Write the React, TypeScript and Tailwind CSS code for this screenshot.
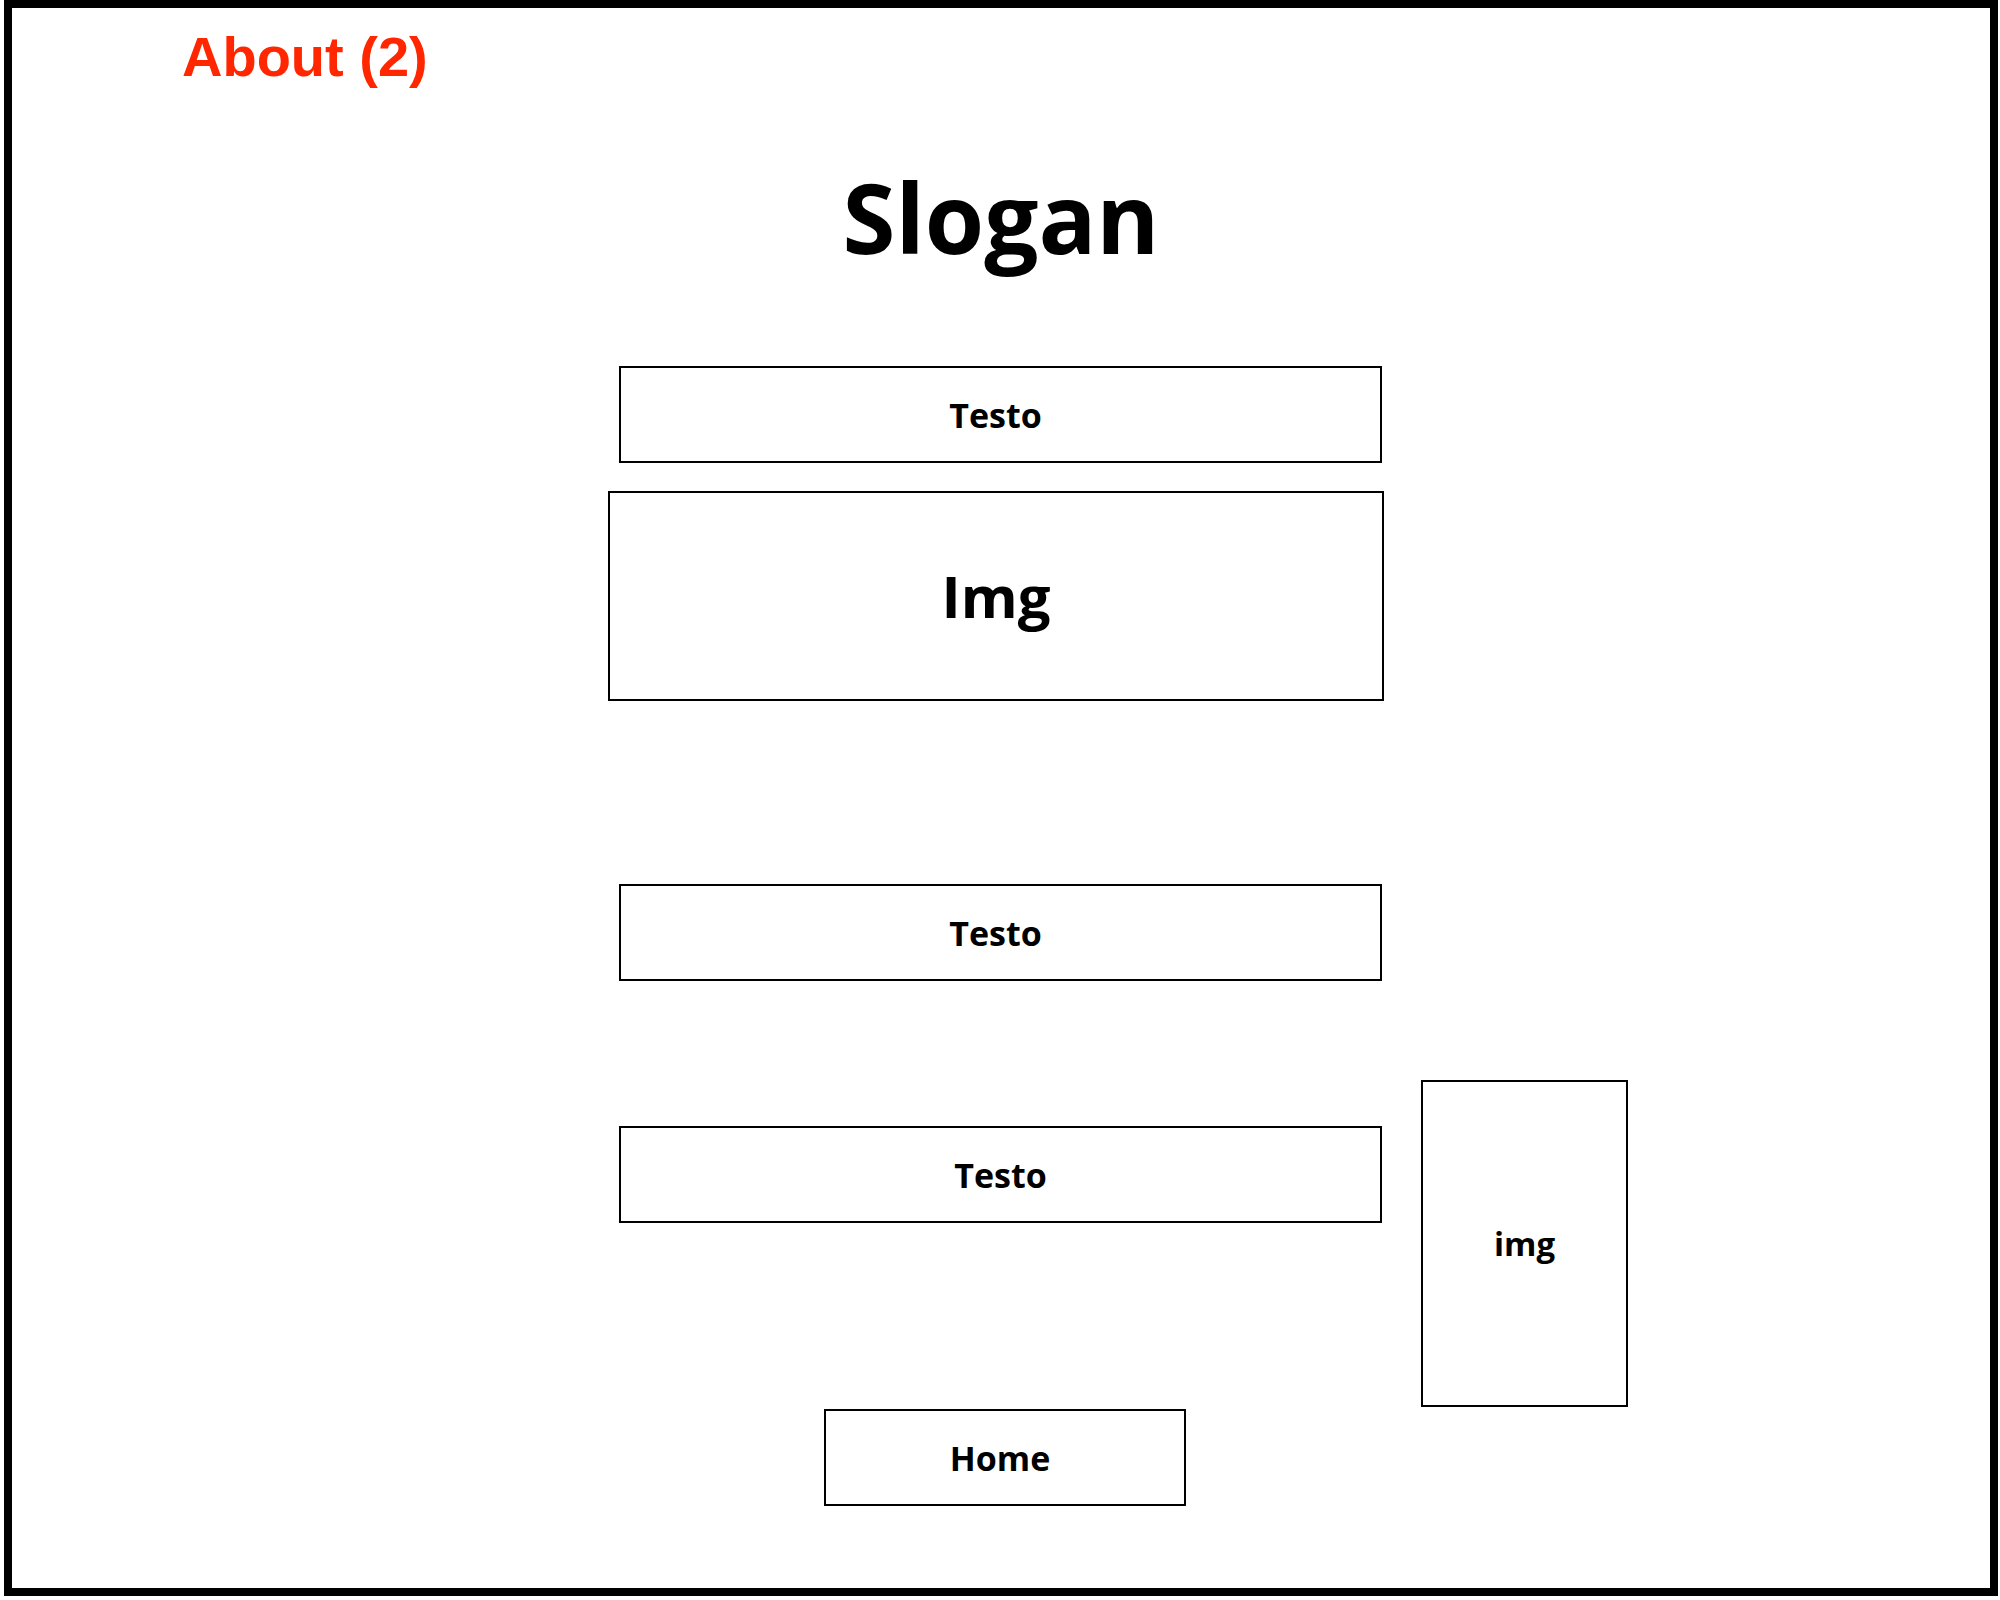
const openSans = "font-['Open_Sans',_'DejaVu_Sans',_sans-serif]";

type BoxProps = {
  className: string;
  label: string;
  textClassName?: string;
};

function Box({ className, label, textClassName = "text-[34px]" }: BoxProps) {
  return (
    <div
      className={`box-border flex items-center justify-center border-2 border-black bg-white ${className}`}
    >
      <span className={`${openSans} font-bold leading-none text-black ${textClassName}`}>
        {label}
      </span>
    </div>
  );
}

export default function App() {
  return (
    <div className="h-[1600px] w-[2000px] bg-white">
      <div className="ml-[4px] box-border h-[1596px] w-[1994px] border-[8px] border-black bg-white">
        <div className="mt-[21px] pl-[170px]">
          <span className="font-['Liberation_Sans',_Arial,_sans-serif] text-[56px] font-bold leading-none text-[#ff2600]">
            About (2)
          </span>
        </div>

        <h1
          className={`${openSans} mt-[84px] text-center text-[96px] font-bold leading-none text-black`}
        >
          Slogan
        </h1>

        <div className="mt-[101px] flex flex-col items-start pl-[607px]">
          <Box className="h-[97px] w-[763px] pr-[10px]" label="Testo" />
          <Box
            className="-ml-[11px] mt-[28px] h-[210px] w-[776px]"
            label="Img"
            textClassName="text-[58px]"
          />
          <Box className="mt-[183px] h-[97px] w-[763px] pr-[10px]" label="Testo" />

          <div className="mt-[99px] flex items-start">
            <div className="flex flex-col items-start pt-[46px]">
              <Box className="h-[97px] w-[763px]" label="Testo" />
              <Box className="ml-[205px] mt-[186px] h-[97px] w-[362px] pr-[10px]" label="Home" />
            </div>
            <Box
              className="ml-[39px] h-[327px] w-[207px]"
              label="img"
              textClassName="text-[33px]"
            />
          </div>
        </div>
      </div>
    </div>
  );
}
